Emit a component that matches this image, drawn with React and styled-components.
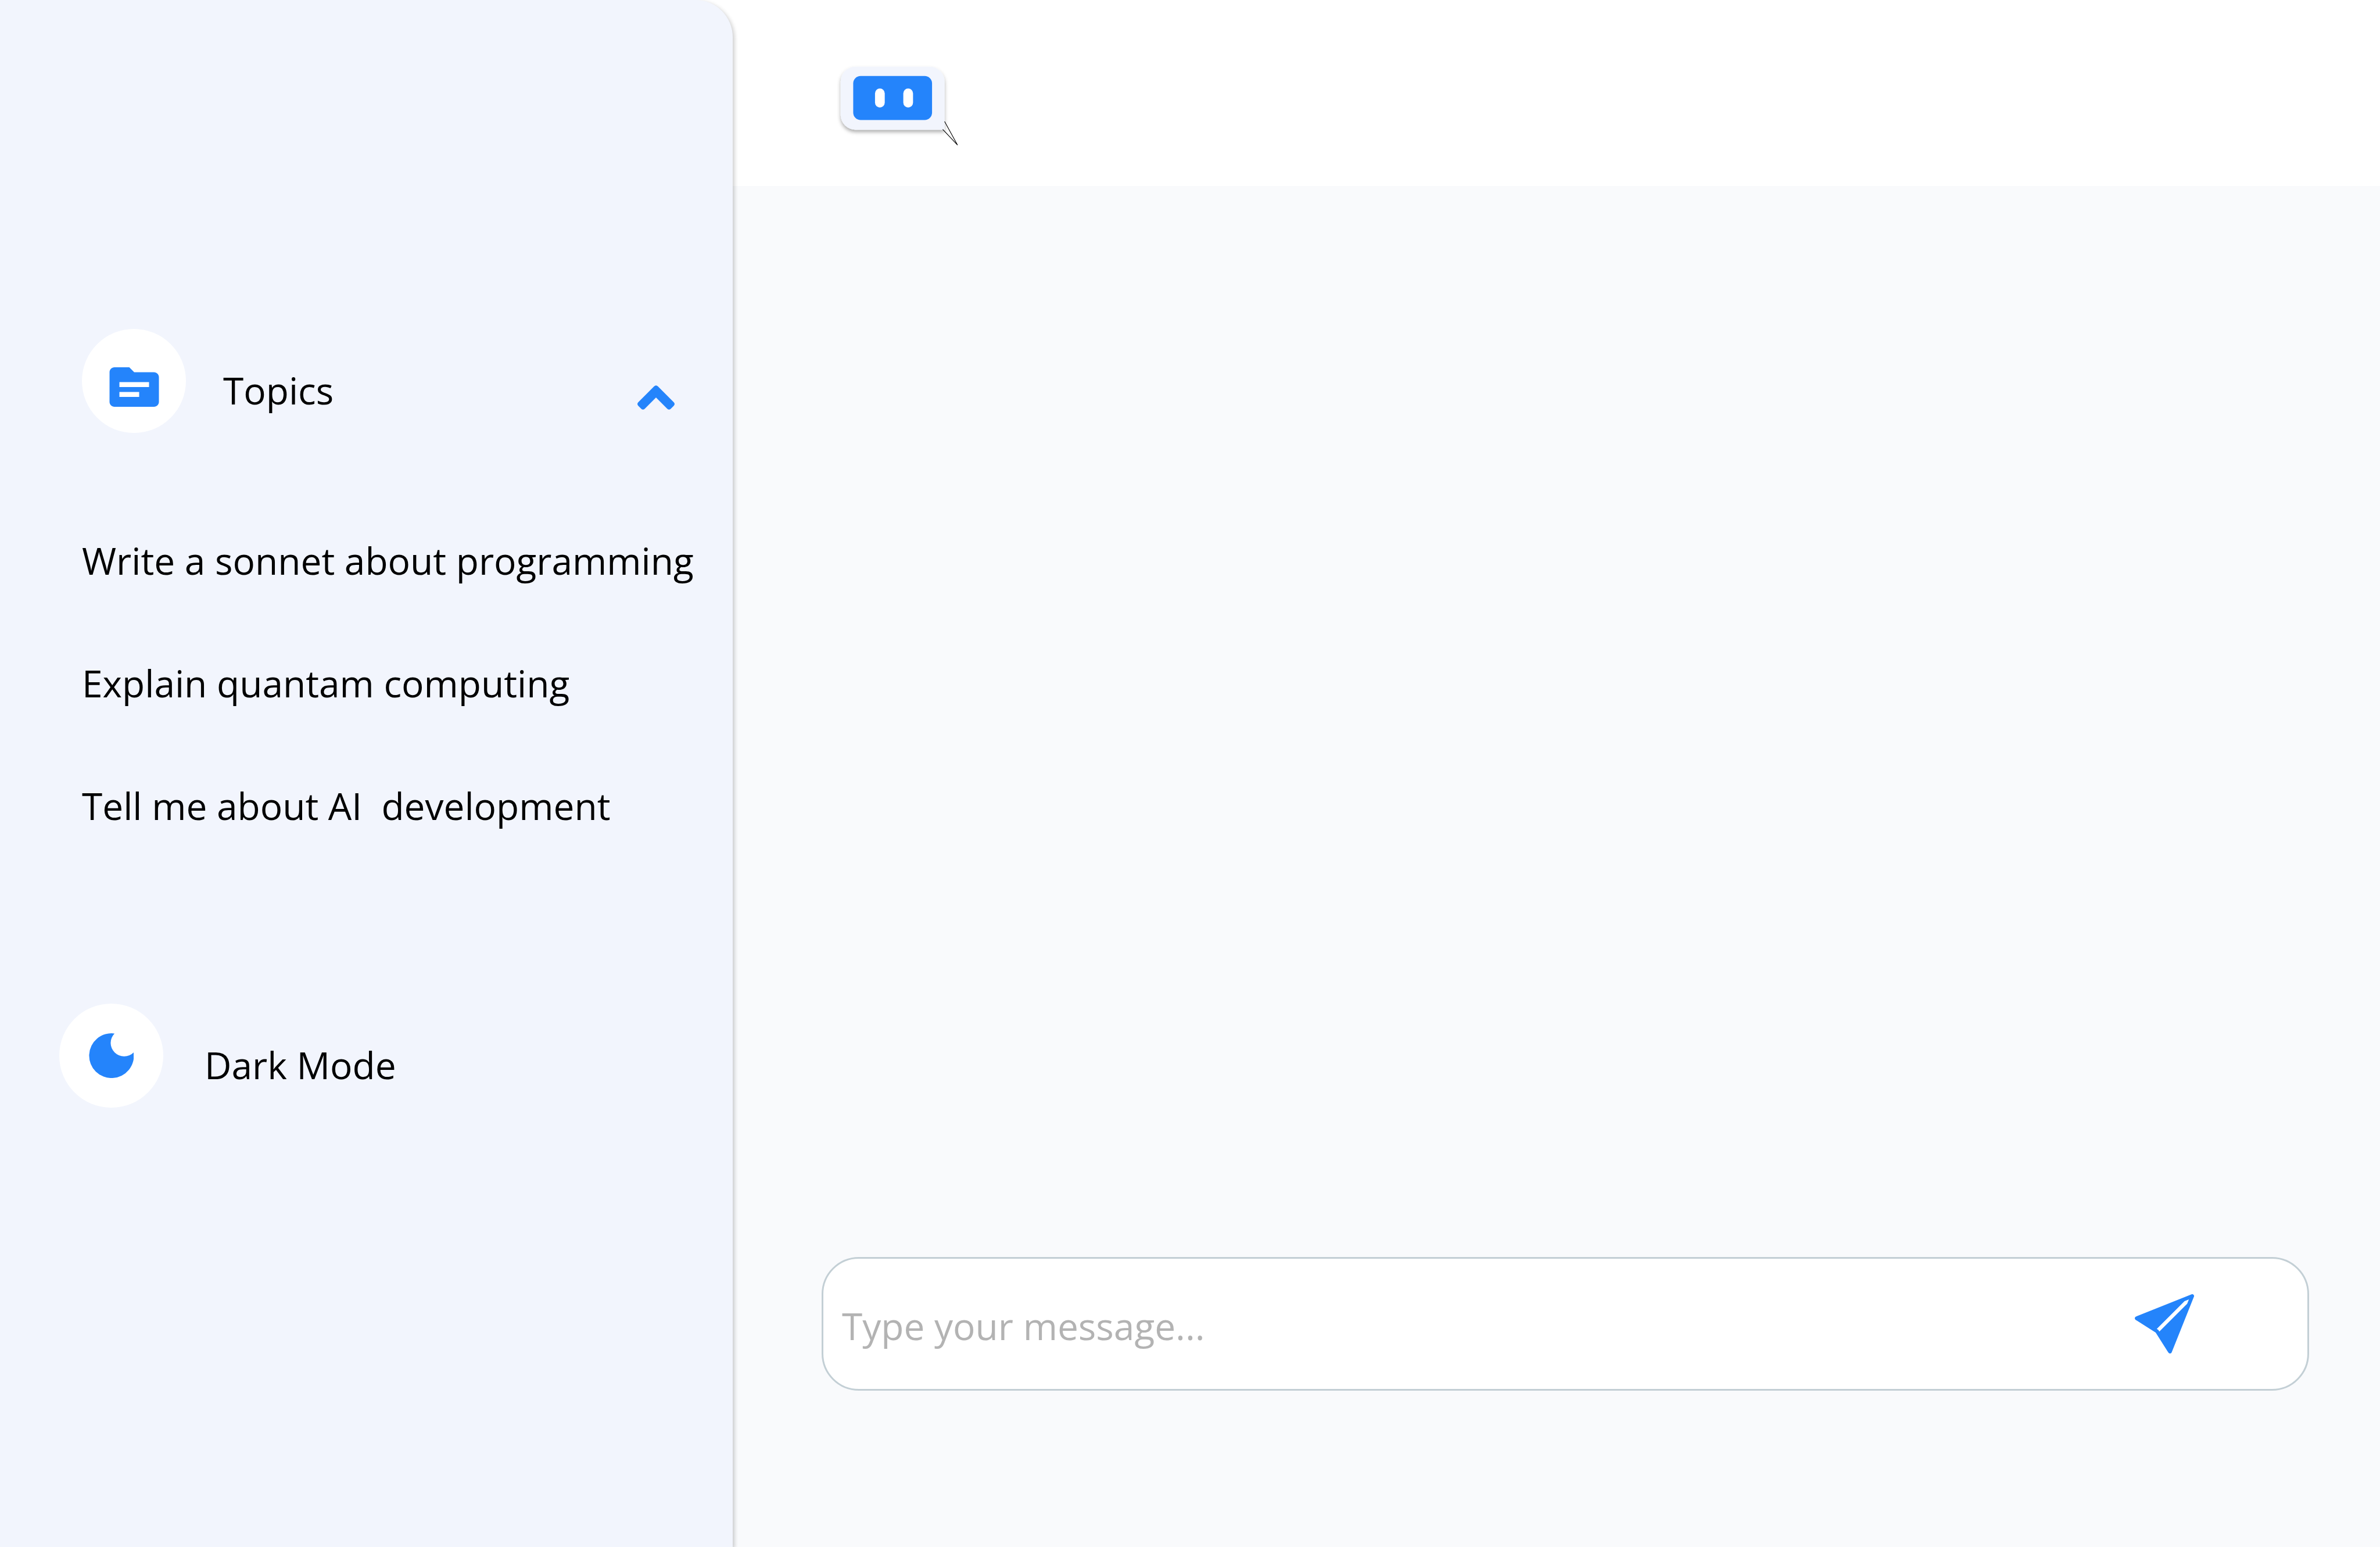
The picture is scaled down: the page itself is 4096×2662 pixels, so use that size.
import React, { useState } from "react";
import styled, { createGlobalStyle } from "styled-components";
import { MdSource } from "react-icons/md";
import { BsSendFill } from "react-icons/bs";

const BLUE = "#2484fb";
const PANEL = "#f2f5fd";

const GlobalStyle = createGlobalStyle`
  *, *::before, *::after { box-sizing: border-box; }
  body {
    margin: 0;
    font-family: "Open Sans", "Noto Sans", sans-serif;
    font-size: 64px;
    line-height: 87px;
    color: #000;
    background: #fff;
  }
  button, input { font: inherit; color: inherit; }
`;

const Page = styled.div`
  display: grid;
  grid-template-columns: 1261px minmax(0, 1fr);
  min-height: 100vh;
`;

const Sidebar = styled.aside`
  position: relative;
  z-index: 1;
  padding: 566px 64px 64px 102px;
  background: ${PANEL};
  border-top-right-radius: 64px;
  box-shadow: 3px 3px 7px rgba(0, 0, 0, 0.2);
`;

const PlainButton = styled.button`
  border: 0;
  padding: 0;
  background: none;
  text-align: left;
  cursor: pointer;
`;

const TopicsSection = styled.section`
  padding-left: 39px;
`;

const SidebarRow = styled(PlainButton)`
  display: flex;
  align-items: flex-end;
  gap: ${(p) => p.$gap}px;
  width: 100%;
`;

const IconDisc = styled.span`
  display: flex;
  align-items: center;
  justify-content: center;
  flex: none;
  width: 179px;
  height: 179px;
  padding-top: ${(p) => p.$drop || 0}px;
  border-radius: 50%;
  background: #fff;
  color: ${BLUE};
`;

const RowLabel = styled.span`
  flex: 1;
  padding-bottom: 30px;
`;

const ChevronIcon = styled.svg`
  flex: none;
  width: 64px;
  height: 42px;
  margin: 0 36px 40px 0;
  transform: ${(p) => (p.$open ? "none" : "rotate(180deg)")};
`;

const TopicList = styled.ul`
  display: flex;
  flex-direction: column;
  gap: 124px;
  margin: 176px 0 297px;
  padding: 0;
  list-style: none;
`;

const TopicItem = styled.li`
  display: flex;
`;

const TopicButton = styled(PlainButton)`
  white-space: pre;
`;

const Main = styled.main`
  display: flex;
  flex-direction: column;
  background: #f9fafc;
`;

const Header = styled.header`
  display: flex;
  height: 320px;
  padding: 102px 173px 0;
  background: #fff;
`;

const Conversation = styled.section`
  flex: 1;
`;

const Composer = styled.form`
  display: flex;
  align-items: center;
  height: 230px;
  margin: 0 122px 269px 153px;
  padding: 0 195px 0 32px;
  border: 3px solid #c3cfd5;
  border-radius: 64px;
  background: #fff;
`;

const MessageInput = styled.input`
  flex: 1;
  min-width: 0;
  height: 100%;
  padding: 7px 0 0;
  border: 0;
  outline: 0;
  background: none;

  &::placeholder {
    color: #b3b3b3;
    opacity: 1;
  }
`;

const SendButton = styled(PlainButton)`
  display: flex;
  flex: none;
  color: ${BLUE};
`;

const LogoDrawing = styled.svg`
  width: 230px;
  height: 166px;
`;

const MoonDrawing = styled.svg`
  width: 77px;
  height: 77px;
`;

function BotLogo() {
  return (
    <LogoDrawing viewBox="0 0 288 208" role="img" aria-label="Chat bot">
      <defs>
        <filter id="bubble-shadow" x="-10%" y="-10%" width="120%" height="130%">
          <feDropShadow dx="0" dy="5" stdDeviation="4" floodColor="#000" floodOpacity="0.32" />
        </filter>
      </defs>
      <path
        d="M48 16H208A32 32 0 0 1 240 48V152H48A32 32 0 0 1 16 120V48A32 32 0 0 1 48 16Z"
        fill={PANEL}
        filter="url(#bubble-shadow)"
      />
      <rect x="43" y="36" width="170" height="95" rx="16" fill={BLUE} />
      <rect x="90" y="63" width="21" height="41" rx="10.5" fill="#fff" />
      <rect x="151" y="63" width="21" height="41" rx="10.5" fill="#fff" />
      <path d="M240 134L268 185L236 151" fill="none" stroke="#000" strokeWidth="1.4" />
    </LogoDrawing>
  );
}

function Chevron({ open }) {
  return (
    <ChevronIcon $open={open} viewBox="0 0 80 52" aria-hidden="true">
      <path
        d="M36 2Q40 -2 44 2L78 36Q82 40 78 44L72 50Q68 54 64 50L40 26L16 50Q12 54 8 50L2 44Q-2 40 2 36Z"
        fill={BLUE}
      />
    </ChevronIcon>
  );
}

function Moon() {
  return (
    <MoonDrawing viewBox="0 0 96 96" aria-hidden="true">
      <path d="M55 0.5A48 48 0 1 0 96 41A28.5 28.5 0 1 1 55 0.5Z" fill="currentColor" />
    </MoonDrawing>
  );
}

const TOPICS = [
  "Write a sonnet about programming",
  "Explain quantam computing",
  "Tell me about AI  development",
];

export default function App() {
  const [open, setOpen] = useState(true);
  const [dark, setDark] = useState(false);
  const [message, setMessage] = useState("");

  return (
    <>
      <GlobalStyle />
      <Page>
        <Sidebar>
          <TopicsSection>
            <SidebarRow type="button" $gap={64} aria-expanded={open} onClick={() => setOpen(!open)}>
              <IconDisc $drop={20}>
                <MdSource size={102} aria-hidden="true" />
              </IconDisc>
              <RowLabel>Topics</RowLabel>
              <Chevron open={open} />
            </SidebarRow>
            <TopicList>
              {open &&
                TOPICS.map((topic) => (
                  <TopicItem key={topic}>
                    <TopicButton type="button" onClick={() => setMessage(topic)}>
                      {topic}
                    </TopicButton>
                  </TopicItem>
                ))}
            </TopicList>
          </TopicsSection>
          <SidebarRow type="button" $gap={71} aria-pressed={dark} onClick={() => setDark(!dark)}>
            <IconDisc>
              <Moon />
            </IconDisc>
            <RowLabel>Dark Mode</RowLabel>
          </SidebarRow>
        </Sidebar>
        <Main>
          <Header>
            <BotLogo />
          </Header>
          <Conversation aria-label="Conversation" />
          <Composer onSubmit={(e) => e.preventDefault()}>
            <MessageInput
              type="text"
              aria-label="Message"
              placeholder="Type your message..."
              value={message}
              onChange={(e) => setMessage(e.target.value)}
            />
            <SendButton type="submit" aria-label="Send">
              <BsSendFill size={102} aria-hidden="true" />
            </SendButton>
          </Composer>
        </Main>
      </Page>
    </>
  );
}
